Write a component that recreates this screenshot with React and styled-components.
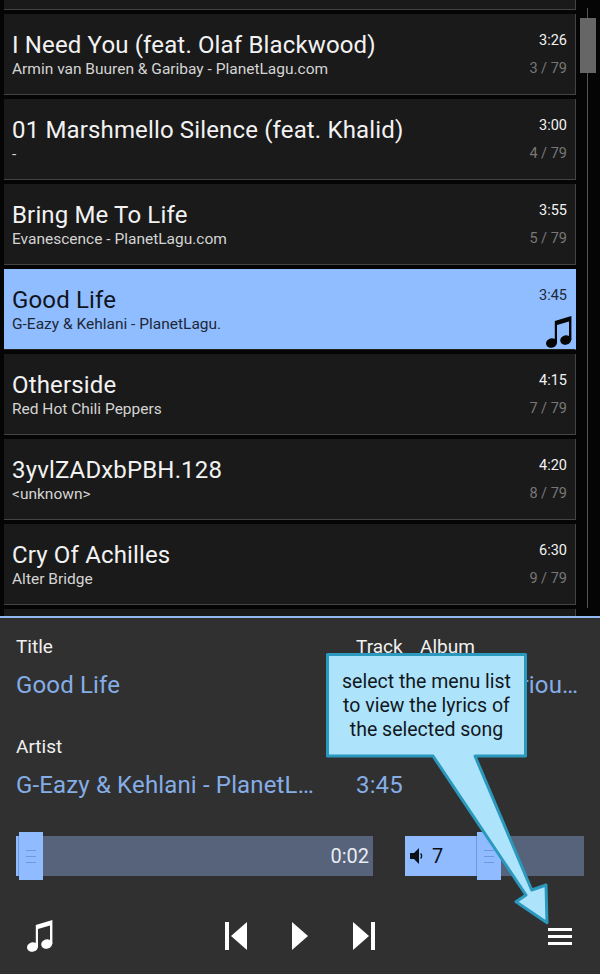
import React from 'react';
import styled, { createGlobalStyle } from 'styled-components';

const GlobalStyle = createGlobalStyle`
    html, body {
        margin: 0;
        padding: 0;
        background: #050505;
    }
    * {
        box-sizing: border-box;
    }
`;

const Screen = styled.div`
    position: relative;
    width: 600px;
    height: 974px;
    display: flex;
    flex-direction: column;
    overflow: hidden;
    background: #050505;
    font-family: Roboto, "Liberation Sans", sans-serif;
`;

const ListArea = styled.div`
    position: relative;
    height: 616px;
    flex: none;
    overflow: hidden;
`;

const SongList = styled.div`
    display: flex;
    flex-direction: column;
    gap: 4px;
    margin-top: -71px;
    padding: 0 24px 0 4px;
`;

const SongRow = styled.div`
    height: 81px;
    flex: none;
    display: flex;
    justify-content: space-between;
    padding: 17px 8px 0;
    background: ${(p) => (p.$active ? '#90bdff' : '#1a1a1a')};
    border-right: 1px solid ${(p) => (p.$active ? '#90bdff' : '#444')};
    border-bottom: 1px solid ${(p) => (p.$active ? '#222' : '#444')};
    color: ${(p) => (p.$active ? '#10141c' : '#f2f2f2')};
`;

const SongText = styled.div`
    display: flex;
    flex-direction: column;
    min-width: 0;
`;

const SongTitle = styled.div`
    font-size: 24px;
    line-height: 28px;
    letter-spacing: 0.15px;
    white-space: nowrap;
`;

const SongArtist = styled.div`
    font-size: 15.5px;
    line-height: 20px;
    white-space: nowrap;
    color: ${(p) => (p.$active ? '#1d2838' : '#d4d4d4')};
`;

const SongMeta = styled.div`
    display: flex;
    flex-direction: column;
    align-items: flex-end;
    font-size: 14.5px;
`;

const SongTime = styled.div`
    line-height: 20px;
    color: ${(p) => (p.$active ? '#1d2838' : '#f2f2f2')};
`;

const SongCount = styled.div`
    margin-top: 8px;
    line-height: 20px;
    color: #777;
`;

const PlayingNote = styled.div`
    margin: 10px -5px 0 0;
    height: 32px;
    color: #050505;
`;

const ScrollTrack = styled.div`
    position: absolute;
    top: 8px;
    left: 587px;
    width: 1px;
    height: 600px;
    background: #555;
`;

const ScrollThumb = styled.div`
    position: absolute;
    top: 18px;
    left: 580px;
    width: 16px;
    height: 55px;
    background: #666;
`;

const Panel = styled.div`
    flex: 1;
    display: flex;
    flex-direction: column;
    background: #303030;
    border-top: 2px solid #90bbf2;
    padding: 17px 16px 0;
`;

const InfoGrid = styled.div`
    display: grid;
    grid-template-columns: 340px 64px 160px;
`;

const Label = styled.div`
    font-size: 19px;
    line-height: 24px;
    margin-bottom: 8px;
    color: #f0f0f0;
`;

const Value = styled.div`
    font-size: 24px;
    line-height: 36px;
    letter-spacing: 0.15px;
    margin-bottom: 32px;
    color: #85ade6;
    white-space: nowrap;
    overflow: hidden;
    text-overflow: ellipsis;
    padding-right: ${(p) => (p.$first ? '40px' : '0')};
`;

const SliderRow = styled.div`
    display: flex;
    justify-content: space-between;
    margin-top: 1px;
`;

const Slider = styled.div`
    position: relative;
    width: ${(p) => p.$width}px;
    height: 40px;
    display: flex;
    align-items: center;
    background: #56637a;
`;

const SliderFill = styled.div`
    position: absolute;
    top: 0;
    bottom: 0;
    left: 0;
    background: #90bbff;
    border-right: 1px solid #6a9ae0;
`;

const SliderThumb = styled.div`
    position: absolute;
    top: -4px;
    width: 24px;
    height: 48px;
    display: flex;
    flex-direction: column;
    align-items: center;
    justify-content: center;
    gap: 5px;
    background: #90bbff;
`;

const ThumbLine = styled.span`
    width: 10px;
    height: 1px;
    background: #6a9ae0;
`;

const SeekTime = styled.div`
    position: relative;
    margin-left: auto;
    padding-right: 4px;
    font-size: 20px;
    color: #e8ecf2;
`;

const VolumeLabel = styled.div`
    position: relative;
    display: flex;
    align-items: center;
    gap: 9px;
    padding-left: 5px;
    font-size: 20px;
    color: #0c1018;
`;

const Controls = styled.div`
    display: flex;
    align-items: center;
    justify-content: space-between;
    margin-top: 44px;
    padding: 0 12px 0 11px;
    color: #fff;
`;

const Transport = styled.div`
    display: flex;
    align-items: center;
    gap: 45px;
    margin-left: -1px;
`;

const Icon = styled.svg`
    display: block;
    fill: currentColor;
`;

const Callout = styled.div`
    position: absolute;
    left: 320px;
    top: 650px;
    width: 240px;
    height: 280px;
`;

const CalloutText = styled.div`
    position: absolute;
    left: 7px;
    top: 20px;
    width: 199px;
    font-size: 19.5px;
    line-height: 24px;
    text-align: center;
    color: #12171c;
`;

const NoteIcon = () => (
    <Icon width="26" height="32" viewBox="0 0 26 32">
        <ellipse cx="5.5" cy="27" rx="5.5" ry="4.7" transform="rotate(-15 5.5 27)" />
        <ellipse cx="19.7" cy="24" rx="5.5" ry="4.7" transform="rotate(-15 19.7 24)" />
        <polygon points="8.8,27 8.8,5 25.4,0 25.4,24 23,24 23,5.5 11,9 11,27" />
    </Icon>
);

const songs = [
    { title: '', artist: '', time: '', count: '' },
    { title: 'I Need You (feat. Olaf Blackwood)', artist: 'Armin van Buuren & Garibay - PlanetLagu.com', time: '3:26', count: '3 / 79' },
    { title: '01 Marshmello Silence (feat. Khalid)', artist: '-', time: '3:00', count: '4 / 79' },
    { title: 'Bring Me To Life', artist: 'Evanescence - PlanetLagu.com', time: '3:55', count: '5 / 79' },
    { title: 'Good Life', artist: 'G-Eazy & Kehlani - PlanetLagu.', time: '3:45', active: true },
    { title: 'Otherside', artist: 'Red Hot Chili Peppers', time: '4:15', count: '7 / 79' },
    { title: '3yvlZADxbPBH.128', artist: '<unknown>', time: '4:20', count: '8 / 79' },
    { title: 'Cry Of Achilles', artist: 'Alter Bridge', time: '6:30', count: '9 / 79' },
    { title: '', artist: '', time: '', count: '' },
];

const Thumb = ({ at }) => (
    <SliderThumb style={{ left: at }}>
        <ThumbLine />
        <ThumbLine />
        <ThumbLine />
    </SliderThumb>
);

const App = () => {
    return (
        <Screen>
            <GlobalStyle />
            <ListArea>
                <SongList>
                    {songs.map((song, i) => (
                        <SongRow key={i} $active={song.active}>
                            <SongText>
                                <SongTitle>{song.title}</SongTitle>
                                <SongArtist $active={song.active}>{song.artist}</SongArtist>
                            </SongText>
                            <SongMeta>
                                <SongTime $active={song.active}>{song.time}</SongTime>
                                {song.active ? (
                                    <PlayingNote><NoteIcon /></PlayingNote>
                                ) : (
                                    <SongCount>{song.count}</SongCount>
                                )}
                            </SongMeta>
                        </SongRow>
                    ))}
                </SongList>
                <ScrollTrack />
                <ScrollThumb />
            </ListArea>

            <Panel>
                <InfoGrid>
                    <Label>Title</Label>
                    <Label>Track</Label>
                    <Label>Album</Label>
                    <Value $first>Good Life</Value>
                    <Value />
                    <Value>Fast &amp; Furiou...</Value>
                    <Label>Artist</Label>
                    <Label />
                    <Label />
                    <Value $first>G-Eazy &amp; Kehlani - PlanetLagu.com</Value>
                    <Value>3:45</Value>
                    <Value />
                </InfoGrid>

                <SliderRow>
                    <Slider $width={357}>
                        <SliderFill style={{ width: 3 }} />
                        <Thumb at={3} />
                        <SeekTime>0:02</SeekTime>
                    </Slider>
                    <Slider $width={179}>
                        <SliderFill style={{ width: 72 }} />
                        <Thumb at={72} />
                        <VolumeLabel>
                            <Icon width="13" height="16" viewBox="0 0 13 16">
                                <polygon points="0,5 4,5 9,0 9,16 4,11 0,11" />
                                <path d="M10.6 5.5 A3.5 3.5 0 0 1 10.6 10.5" fill="none" stroke="currentColor" strokeWidth="1.3" />
                            </Icon>
                            7
                        </VolumeLabel>
                    </Slider>
                </SliderRow>

                <Controls>
                    <NoteIcon />
                    <Transport>
                        <Icon width="22" height="28" viewBox="0 0 22 28">
                            <rect x="0" y="0" width="4" height="28" />
                            <polygon points="22,0 22,28 6,14" />
                        </Icon>
                        <Icon width="16" height="28" viewBox="0 0 16 28">
                            <polygon points="0,0 16,14 0,28" />
                        </Icon>
                        <Icon width="22" height="28" viewBox="0 0 22 28">
                            <polygon points="0,0 16,14 0,28" />
                            <rect x="18" y="0" width="4" height="28" />
                        </Icon>
                    </Transport>
                    <Icon width="24" height="17" viewBox="0 0 24 17">
                        <rect x="0" y="0" width="24" height="3" />
                        <rect x="0" y="7" width="24" height="3" />
                        <rect x="0" y="14" width="24" height="3" />
                    </Icon>
                </Controls>
            </Panel>

            <Callout>
                <svg width="240" height="280" viewBox="0 0 240 280">
                    <path
                        d="M7.5 4.5 H205.5 V106 H155 L211.7 240 L226 235 L227 272.7 L196 251.7 L206 245 L113 106 H7.5 Z"
                        fill="#ade4fc"
                        stroke="#2b98bd"
                        strokeWidth="3"
                        strokeLinejoin="round"
                    />
                </svg>
                <CalloutText>
                    select the menu list
                    <br />
                    to view the lyrics of
                    <br />
                    the selected song
                </CalloutText>
            </Callout>
        </Screen>
    );
};

export default App;
